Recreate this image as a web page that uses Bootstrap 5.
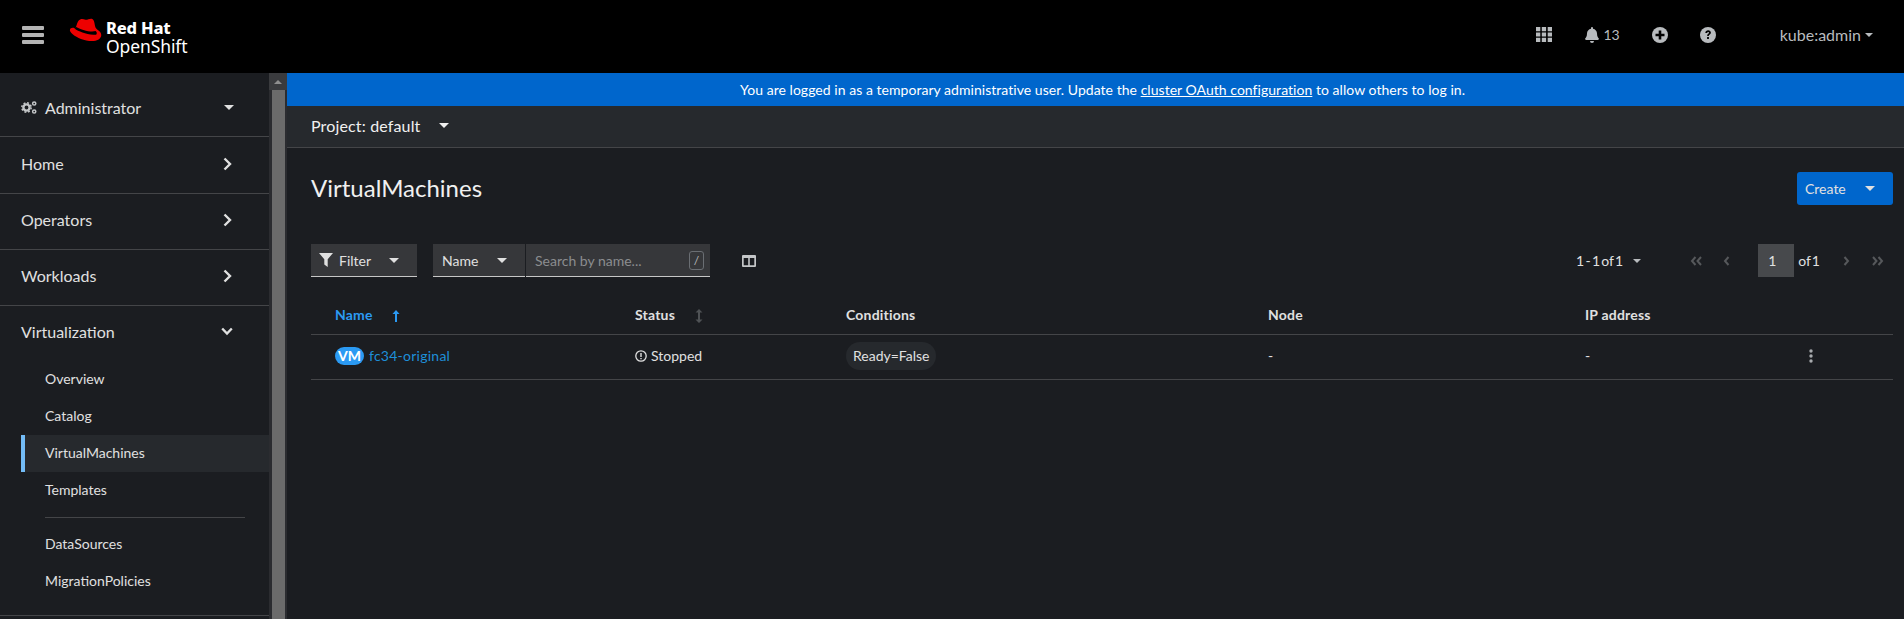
<!doctype html>
<html lang="en"><head><meta charset="utf-8"><title>VirtualMachines</title>
<link href="https://cdn.jsdelivr.net/npm/bootstrap@5.3.0/dist/css/bootstrap.min.css" rel="stylesheet">
<style>
html,body{height:100%;overflow:hidden}
body{background:#1b1d21;color:#e0e0e0;font-family:Lato,"Open Sans",sans-serif;font-size:14px}
.ocp-mast{height:73px;background:#000;padding:0 31px 4px 22px}
.ocp-burger{width:22px;height:18px;display:flex;flex-direction:column;justify-content:space-between;margin-right:25px}
.ocp-burger i{display:block;height:4px;border-radius:1px;background:#b4b4b4}
.ocp-logo{gap:4px}
.ocp-logosvg{flex:none;margin-top:-9px}
.ocp-logotext{color:#fff;font-family:"Noto Sans",sans-serif;margin-top:4px}
.ocp-logotext b{display:block;font-weight:800;font-size:16.500px;line-height:18px;letter-spacing:-.2px}
.ocp-logotext span{display:block;font-size:17.500px;line-height:18px;letter-spacing:-.1px}
.ocp-tools{color:#b8bbbe}
.ocp-user{color:#b8bbbe;font-size:16px;margin-left:64px}
.ocp-shell{height:calc(100vh - 73px)}
.ocp-side{width:269px;background:#1b1d21;flex:none}
.ocp-top{height:64px;padding:6px 35px 0 21px;border-bottom:1px solid #444548;font-size:16px;color:#e0e0e0}
.ocp-group{height:56px;padding:0 37px 4px 21px;border-bottom:1px solid #444548;font-size:16px;color:#e0e0e0}
.ocp-g57{height:57px;padding-bottom:3px}
.ocp-open{height:55px;padding:0 37px 4px 21px;font-size:16px;color:#e0e0e0}
.ocp-sub{margin-left:21px;height:37px;padding:0 0 2px 24px;font-size:14px;color:#e0e0e0;display:flex;align-items:center}
.ocp-sub.ocp-on{background:#26292d;border-left:4px solid #73bcf7;padding-left:20px}
.ocp-sep{margin:8px 24px 8px 45px;border-top:1px solid #444548;height:1px}
.ocp-sublist{height:255px;border-bottom:1px solid #444548}
.ocp-track{width:18px;flex:none;background:#2b2c30;display:flex;flex-direction:column;align-items:center}
.ocp-up{height:17px;width:18px;display:flex;align-items:center;justify-content:center;background:#3a3b3e}
.ocp-upcaret{width:0;height:0;border-left:4px solid transparent;border-right:4px solid transparent;border-bottom:4px solid #8f8f8f}
.ocp-thumb{flex:1;width:13px;background:#6b6b6b}
.ocp-main{min-width:0;background:#1b1d21}
.ocp-banner{height:33px;background:#06c;color:#fff;font-size:14px;padding-left:14px;letter-spacing:.04px}
.ocp-banner a{color:#fff}
.ocp-proj{height:42px;background:#26292d;border-bottom:1px solid #444548;padding:0 24px 2px;color:#f0f0f0;font-size:16px;letter-spacing:.15px}
.ocp-caret{display:inline-block;border-left:5px solid transparent;border-right:5px solid transparent;border-top:5px solid currentColor}
.ocp-body{padding:0 11px 0 24px}
.ocp-titlerow{height:96px;padding-bottom:15px}
.ocp-title{font-size:24px;font-weight:400;color:#f0f0f0;margin:0}
.ocp-create{width:96px;height:33px;background:#06c;color:#e0e0e0;border:0;border-radius:3px;font-size:14px;padding:0 18px 0 8px}
.ocp-create:hover{background:#06c;color:#e0e0e0}
.ocp-tb{height:33px;background:#36373a;border-bottom:1px solid #c7c7c7;color:#e0e0e0;font-size:14px}
.ocp-tb1{width:106px;padding:0 18px 0 8px}
.ocp-tb2{width:92px;margin-left:16px;padding:0 18px 0 9px}
.ocp-tb3{width:184px;margin-left:1px;padding:0 6px 0 9px;color:#8b8d8f}
.ocp-key{width:15px;height:19px;border:1px solid #6a6e73;border-radius:3px;color:#b8bbbe;font-size:12px;text-align:center;line-height:17px}
.ocp-page{font-size:14px;color:#e0e0e0}
.ocp-tight{word-spacing:-2.300px}
.ocp-pnum{width:36px;height:33px;background:#47494c;color:#e0e0e0;padding-left:10px;line-height:33px}
.ocp-tbl{--bs-table-bg:transparent;--bs-table-color:#e0e0e0;table-layout:fixed;margin:0;width:1582px;font-size:14px;color:#e0e0e0}
.ocp-tbl th{height:57px;padding:0 0 9px;border-bottom:1px solid #444548;font-weight:700;vertical-align:bottom;font-size:14px;letter-spacing:.2px}
.ocp-tbl td{height:45px;padding:0 0 2px;border-bottom:1px solid #444548;vertical-align:middle}
.ocp-tbl .ocp-c1{padding-left:24px}
.ocp-tbl th.ocp-sorted{color:#2b9af3}
.ocp-vm{background:#2b9af3;color:#fff;border-radius:10px;font-size:14px;height:18px;line-height:18px;display:inline-block;margin-right:5px;font-weight:700;width:29px;text-align:center}
.ocp-link{color:#1e8fd8;text-decoration:none;letter-spacing:.25px}
.ocp-pill{background:#26292d;border-radius:14px;padding:6px 7px;font-size:14px;color:#e0e0e0;display:inline-block;line-height:16px}
</style></head><body>
<nav class="navbar ocp-mast flex-nowrap">
 <div class="d-flex align-items-center">
  <div class="ocp-burger"><i></i><i></i><i></i></div>
  <div class="ocp-logo d-flex align-items-center">
   <svg width="33" height="25" viewBox="0 0 33 26" class="ocp-logosvg"><path fill="#e00" d="M11 1.500c2-.9 3.600-.1 5.500.3 2.200.2 5-1.800 7-.8 2.300 1.100 2.400 5.300 3 7.500.4 1.700 1.500 3 3.500 4.500 2.500 1.800 3.200 3.800 2.800 5.800-.7 3.200-4.500 5.200-9.300 5.200C15 24 7.500 20.500 3.500 17.200.8 15 .1 13.500.3 12.200c.4-1.800 3-2.500 4.700-1.500l1 .5 1.200-3.700C8.200 4.500 9 2.300 11 1.500z"/><path fill="#000" d="M5.300 11.300c4 2.600 12.500 6.700 21.500 6 .8-.1 1.300-.3 1.400-1.300.1-1.100-.4-1.900-1.300-2.400-2.200.8-7 .7-12.500-1.100-3.500-1.100-6.800-2.700-7.500-3.200z"/></svg>
   <div class="ocp-logotext"><b>Red Hat</b><span>OpenShift</span></div>
  </div>
 </div>
 <div class="d-flex align-items-center ocp-tools">
  <svg width="16" height="15" viewBox="0 0 16 15" fill="#b8bbbe" style="margin-right:33px"><path d="M0 0h4.300v4.200H0zM5.800 0h4.300v4.200H5.800zM11.700 0H16v4.200h-4.300zM0 5.400h4.300v4.200H0zM5.800 5.400h4.300v4.200H5.800zM11.700 5.400H16v4.200h-4.300zM0 10.800h4.300V15H0zM5.800 10.800h4.300V15H5.800zM11.700 10.800H16V15h-4.300z"/></svg>
  <svg width="14" height="16" viewBox="0 0 14 16" fill="#b8bbbe"><path d="M7 16a2 2 0 0 0 2-2H5a2 2 0 0 0 2 2zM13.700 11.300c-.6-.7-1.700-1.600-1.700-4.800 0-2.400-1.700-4.300-4-4.800V1a1 1 0 0 0-2 0v.7C3.700 2.200 2 4.100 2 6.500c0 3.200-1.100 4.100-1.700 4.800-.4.500 0 1.700.7 1.700h12c.7 0 1.100-1.200.7-1.700z"/></svg>
  <span class="ms-1" style="margin-right:32px;font-size:14px">13</span>
  <svg width="16" height="16" viewBox="0 0 16 16" style="margin-right:32px"><circle cx="8" cy="8" r="8" fill="#b8bbbe"/><path d="M6.700 3.500h2.600v3.200h3.200v2.600H9.300v3.200H6.700V9.300H3.500V6.700h3.200z" fill="#000"/></svg>
  <svg width="16" height="16" viewBox="0 0 16 16"><circle cx="8" cy="8" r="8" fill="#b8bbbe"/><path d="M5.300 6c.1-1.700 1.300-2.700 2.900-2.700 1.500 0 2.700 1 2.700 2.300 0 1.100-.6 1.600-1.400 2.200-.6.400-.7.700-.7 1.200H7.200c0-1 .2-1.600 1-2.200.6-.4.900-.7.900-1.100 0-.5-.4-.8-.9-.8-.6 0-1 .4-1.100 1.100zM7.100 10h1.800v1.900H7.100z" fill="#000"/></svg>
  <span class="ocp-user">kube:admin</span><span class="ocp-caret ms-1" style="border-width:4px 4px 0 4px"></span>
 </div>
</nav>
<div class="d-flex ocp-shell">
 <aside class="ocp-side">
  <div class="ocp-top d-flex align-items-center justify-content-between">
   <span class="d-flex align-items-center"><svg width="16" height="13" viewBox="0 0 16 13" class="me-2" fill="none"><circle cx="5.500" cy="6.500" r="3.100" stroke="#c4c6c8" stroke-width="2.400"/><circle cx="5.500" cy="6.500" r="4.700" stroke="#c4c6c8" stroke-width="1.500" stroke-dasharray="1.900 1.800"/><circle cx="13.200" cy="2.500" r="1.600" stroke="#c4c6c8" stroke-width="1.500"/><circle cx="13.200" cy="10.500" r="1.600" stroke="#c4c6c8" stroke-width="1.500"/></svg>Administrator</span>
   <span class="ocp-caret"></span>
  </div>
  <div class="ocp-group ocp-g57 d-flex align-items-center justify-content-between"><span>Home</span><svg width="9" height="14" viewBox="0 0 9 14"><path d="M1.500 1.500 7 7l-5.500 5.500" fill="none" stroke="#e0e0e0" stroke-width="2.400"/></svg></div>
  <div class="ocp-group d-flex align-items-center justify-content-between"><span>Operators</span><svg width="9" height="14" viewBox="0 0 9 14"><path d="M1.500 1.500 7 7l-5.500 5.500" fill="none" stroke="#e0e0e0" stroke-width="2.400"/></svg></div>
  <div class="ocp-group d-flex align-items-center justify-content-between"><span>Workloads</span><svg width="9" height="14" viewBox="0 0 9 14"><path d="M1.500 1.500 7 7l-5.500 5.500" fill="none" stroke="#e0e0e0" stroke-width="2.400"/></svg></div>
  <div class="ocp-open d-flex align-items-center justify-content-between"><span>Virtualization</span><svg width="12" height="9" viewBox="0 0 12 9" style="margin-right:-1px"><path d="M1.200 1.500 6 6.500l4.800-5" fill="none" stroke="#e0e0e0" stroke-width="2.400"/></svg></div>
  <div class="ocp-sublist">
   <div class="ocp-sub">Overview</div><div class="ocp-sub">Catalog</div><div class="ocp-sub ocp-on">VirtualMachines</div><div class="ocp-sub">Templates</div>
   <div class="ocp-sep"></div>
   <div class="ocp-sub">DataSources</div><div class="ocp-sub">MigrationPolicies</div>
  </div>
 </aside>
 <div class="ocp-track"><div class="ocp-up"><span class="ocp-upcaret"></span></div><div class="ocp-thumb"></div></div>
 <main class="ocp-main flex-grow-1">
  <div class="ocp-banner d-flex align-items-center justify-content-center"><span>You are logged in as a temporary administrative user. Update the <a href="#">cluster OAuth configuration</a> to allow others to log in.</span></div>
  <div class="ocp-proj d-flex align-items-center"><span>Project: default</span><span class="ocp-caret" style="margin-left:19px"></span></div>
  <div class="ocp-body">
   <div class="ocp-titlerow d-flex align-items-center justify-content-between">
    <h1 class="ocp-title">VirtualMachines</h1>
    <button class="btn ocp-create d-flex align-items-center justify-content-between"><span>Create</span><span class="ocp-caret"></span></button>
   </div>
   <div class="d-flex align-items-center justify-content-between">
    <div class="d-flex align-items-center">
     <div class="ocp-tb ocp-tb1 d-flex align-items-center justify-content-between"><span class="d-flex align-items-center"><svg width="14" height="14" viewBox="0 0 14 14" fill="#e0e0e0" class="me-1"><path d="M0 0h14L8.700 6.300V14L5.300 11.500V6.300z"/></svg><span style="margin-left:2px">Filter</span></span><span class="ocp-caret"></span></div>
     <div class="ocp-tb ocp-tb2 d-flex align-items-center justify-content-between"><span>Name</span><span class="ocp-caret"></span></div>
     <div class="ocp-tb ocp-tb3 d-flex align-items-center justify-content-between"><span>Search by name...</span><span class="ocp-key">/</span></div>
     <svg width="14" height="12" viewBox="0 0 14 12" style="margin-left:32px"><path fill="#c4c6c8" fill-rule="evenodd" d="M1 0h12a1 1 0 0 1 1 1v10a1 1 0 0 1-1 1H1a1 1 0 0 1-1-1V1a1 1 0 0 1 1-1zM1.700 3v7.300h4.500V3zM7.800 3v7.300h4.500V3z"/></svg>
    </div>
    <div class="ocp-page d-flex align-items-center">
     <span class="ocp-tight">1 - 1 of 1</span><span class="ocp-caret" style="margin-left:10px;border-width:4px 4.500px 0 4.500px;color:#b8bbbe;margin-right:49px"></span>
     <svg width="13" height="10" viewBox="0 0 13 10"><path d="M5.500 1 2 5l3.500 4M11 1 7.500 5l3.500 4" fill="none" stroke="#56585b" stroke-width="2"/></svg>
     <svg width="7" height="10" viewBox="0 0 7 10" style="margin-left:20px"><path d="M5.500 1 2 5l3.500 4" fill="none" stroke="#56585b" stroke-width="2"/></svg>
     <div class="ocp-pnum" style="margin-left:28px">1</div><span class="ocp-tight" style="margin-left:4px">of 1</span>
     <svg width="7" height="10" viewBox="0 0 7 10" style="margin-left:23px"><path d="M1.500 1 5 5 1.500 9" fill="none" stroke="#56585b" stroke-width="2"/></svg>
     <svg width="13" height="10" viewBox="0 0 13 10" style="margin-left:21px;margin-right:9px"><path d="M2 1l3.500 4L2 9M7.500 1 11 5l-3.500 4" fill="none" stroke="#56585b" stroke-width="2"/></svg>
    </div>
   </div>
   <table class="table ocp-tbl">
    <colgroup><col style="width:324px"><col style="width:211px"><col style="width:422px"><col style="width:317px"><col style="width:205px"><col></colgroup>
    <thead><tr>
     <th class="ocp-c1 ocp-sorted">Name <svg width="8" height="12" viewBox="0 0 8 12" style="margin-left:16px"><path d="M4 0 7.500 4H5v8H3V4H.5z" fill="#2b9af3"/></svg></th>
     <th>Status <svg width="8" height="14" viewBox="0 0 8 14" style="margin-left:16px"><path d="M4 0 7.500 3.500H5v7h2.500L4 14 .5 10.500H3v-7H.5z" fill="#4f5255"/></svg></th>
     <th>Conditions</th><th>Node</th><th>IP address</th><th></th></tr></thead>
    <tbody><tr>
     <td class="ocp-c1"><span class="ocp-vm">VM</span><a class="ocp-link" href="#">fc34-original</a></td>
     <td><svg width="12" height="12" viewBox="0 0 12 12" class="me-1" style="vertical-align:-1px"><circle cx="6" cy="6" r="5.200" fill="none" stroke="#e0e0e0" stroke-width="1.300"/><path d="M5.300 3h1.400v4H5.300zM5.300 8h1.400v1.300H5.300z" fill="#e0e0e0"/></svg>Stopped</td>
     <td><span class="ocp-pill">Ready=False</span></td><td>-</td><td>-</td>
     <td><svg width="4" height="14" viewBox="0 0 4 14" fill="#a8abae" style="display:block;margin-left:19px"><circle cx="2" cy="2" r="1.700"/><circle cx="2" cy="7" r="1.700"/><circle cx="2" cy="12" r="1.700"/></svg></td>
    </tr></tbody>
   </table>
  </div>
 </main>
</div>
</body></html>
